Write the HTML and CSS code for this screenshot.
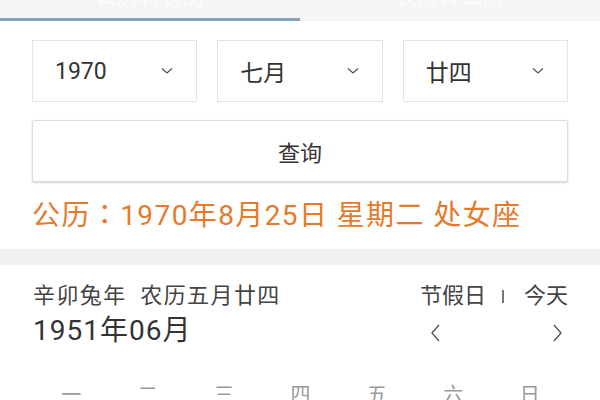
FILE: index.html
```html
<!DOCTYPE html>
<html>
<head>
	<meta charset="utf-8">
	<meta name="viewport" content="width=device-width, initial-scale=1">
	<title>万年历</title>
	<link rel="stylesheet" href="styles.css">
</head>
<body>

<div class="tabs">
	<div class="tab active"><span>公历转农历</span></div>
	<div class="tab"><span>农历转公历</span></div>
</div>

<div class="query">
	<div class="selects">
		<div class="select">
			<span>1970</span>
			<svg width="12" height="8" viewBox="0 0 12 8"><polyline points="1,1.5 6,6 11,1.5" fill="none" stroke="#555" stroke-width="1.3"/></svg>
		</div>
		<div class="select">
			<span>七月</span>
			<svg width="12" height="8" viewBox="0 0 12 8"><polyline points="1,1.5 6,6 11,1.5" fill="none" stroke="#555" stroke-width="1.3"/></svg>
		</div>
		<div class="select">
			<span>廿四</span>
			<svg width="12" height="8" viewBox="0 0 12 8"><polyline points="1,1.5 6,6 11,1.5" fill="none" stroke="#555" stroke-width="1.3"/></svg>
		</div>
	</div>
	<button class="btn">查询</button>
	<div class="result">公历<span class="colon">：</span>1970年8月25日 星期二 处女座</div>
</div>

<div class="band"></div>

<div class="calendar">
	<div class="cal-head">
		<div class="cal-left">
			<div class="lunar">辛卯兔年&nbsp;&nbsp;农历五月廿四</div>
			<div class="month">1951年06月</div>
		</div>
		<div class="cal-right">
			<div class="links">节假日<span class="sep"></span>今天</div>
			<div class="arrows">
				<svg width="14" height="22" viewBox="0 0 14 22"><polyline points="11,3 4,11 11,19" fill="none" stroke="#555" stroke-width="1.4"/></svg>
				<svg width="14" height="22" viewBox="0 0 14 22"><polyline points="3,3 10,11 3,19" fill="none" stroke="#555" stroke-width="1.4"/></svg>
			</div>
		</div>
	</div>
	<div class="week">
		<span>一</span><span>二</span><span>三</span><span>四</span><span>五</span><span>六</span><span>日</span>
	</div>
</div>

</body>
</html>
```

FILE: styles.css
```css
body {
	font-family: Roboto, "Noto Sans CJK SC", sans-serif;
	margin: 0;
	padding: 0;
	background-color: #fff;
	color: #333;
	width: 600px;
	overflow: hidden;
}
.tabs {
	display: flex;
	height: 21px;
	background-color: #f5f5f5;
	overflow: hidden;
}
.tab {
	flex: 1;
	text-align: center;
	font-size: 22px;
	color: #fcfcfc;
	border-bottom: 3px solid transparent;
	line-height: 18px;
}
.tab span {
	display: block;
	margin-top: -12px;
}
.tab.active {
	border-bottom-color: #86a2b9;
}
.query {
	padding: 19px 32px 0;
}
.selects {
	display: flex;
	gap: 20px;
}
.select {
	flex: 1;
	height: 60px;
	border: 1px solid #e3e3e3;
	display: flex;
	align-items: center;
	justify-content: space-between;
	padding: 0 23px 0 22px;
	font-size: 23px;
	color: #333;
}
.btn {
	display: block;
	width: 100%;
	height: 62px;
	margin-top: 18px;
	background-color: #fff;
	border: 1px solid #dcdcdc;
	border-radius: 2px;
	box-shadow: 0 1px 2px rgba(0, 0, 0, 0.18);
	font-family: inherit;
	font-size: 22px;
	color: #333;
}
.result {
	margin-top: 12px;
	font-size: 28px;
	line-height: 38px;
	letter-spacing: 1.4px;
	color: #e6792b;
	white-space: nowrap;
}
.colon {
	font-family: "Noto Sans CJK TC", sans-serif;
}
.band {
	height: 16px;
	margin-top: 14px;
	background-color: #f1f1f1;
}
.calendar {
	padding: 16px 32px 0 33px;
}
.cal-head {
	display: flex;
	justify-content: space-between;
}
.lunar {
	font-size: 22px;
	line-height: 29px;
	letter-spacing: 1.4px;
	color: #444;
}
.month {
	margin-top: 3px;
	font-size: 28px;
	line-height: 36px;
	letter-spacing: 1px;
	color: #333;
}
.cal-right {
	width: 150px;
}
.links {
	display: flex;
	align-items: center;
	justify-content: flex-end;
	font-size: 22px;
	line-height: 29px;
	color: #444;
}
.sep {
	width: 0;
	height: 13px;
	border-left: 2px solid #777;
	margin: 2px 20px 0 16px;
}
.arrows {
	display: flex;
	justify-content: space-between;
	padding: 12px 3px 0 10px;
}
.week {
	display: grid;
	grid-template-columns: repeat(7, 1fr);
	margin-top: 30px;
	font-size: 20px;
	color: #999;
	text-align: center;
}
```
